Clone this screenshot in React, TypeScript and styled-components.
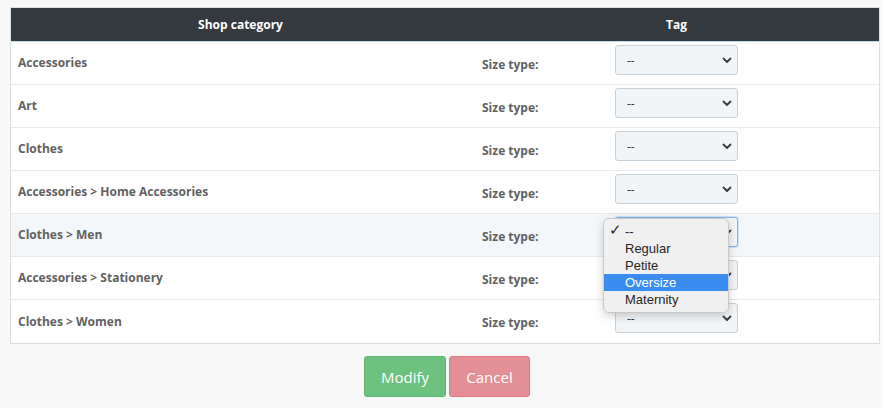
import React from "react";
import styled, { createGlobalStyle } from "styled-components";

const Global = createGlobalStyle`
  html, body { margin: 0; padding: 0; background: #f8f8f8; }
  body { font-family: "Open Sans", "DejaVu Sans", sans-serif; }
  * { box-sizing: border-box; }
`;

const Page = styled.div`
  padding: 7px 4px 0 10px;
  width: 883px;
`;

const Table = styled.div`
  width: 870px;
  border: 1px solid #dcdfe2;
  background: #fff;
`;

const HeaderRow = styled.div`
  display: grid;
  grid-template-columns: 459px 1fr;
  height: 34px;
  background: #343a40;
  border-bottom: 1px solid #b9dde9;
`;

const HeaderCell = styled.div<{ $shift?: number }>`
  display: flex;
  align-items: center;
  justify-content: center;
  color: #fff;
  font-weight: 700;
  font-size: 12px;
  padding-bottom: 1px;
  padding-left: ${(p) => p.$shift ?? 0}px;
`;

const Row = styled.div<{ $hover?: boolean; $last?: boolean }>`
  display: grid;
  grid-template-columns: 459px 1fr;
  height: 43px;
  background: ${(p) => (p.$hover ? "#f4f7fa" : "#fff")};
  border-bottom: ${(p) => (p.$last ? "none" : "1px solid #e6e9ed")};
`;

const CategoryCell = styled.div`
  display: flex;
  align-items: center;
  padding: 0 0 1px 7px;
  font-size: 12px;
  font-weight: 700;
  color: #616161;
`;

const TagCell = styled.div`
  display: flex;
  align-items: flex-start;
  padding: 3px 0 0 12px;
`;

const Label = styled.div`
  width: 133px;
  padding-top: 12px;
  line-height: 16px;
  font-size: 12px;
  font-weight: 700;
  color: #616161;
`;

const SelectBox = styled.div<{ $focus?: boolean }>`
  position: relative;
  width: 123px;
  height: 30px;
  display: flex;
  align-items: center;
  justify-content: space-between;
  padding: 0 5px 0 11px;
  background: #f2f5f7;
  border: 1px solid ${(p) => (p.$focus ? "#7fb6e8" : "#c7d1d9")};
  border-radius: 3px;
  box-shadow: ${(p) => (p.$focus ? "0 0 0 1px rgba(128,182,232,0.35)" : "none")};
  font-size: 12px;
  color: #444;
`;

const Value = styled.span`
  font-size: 12px;
  color: #333;
  margin-top: 1px;
`;

const Dropdown = styled.div`
  position: absolute;
  left: -13px;
  top: 0px;
  width: 126px;
  padding: 4px 0 4px;
  background: #f0f0f0;
  border: 1px solid #c9c9c9;
  border-radius: 6px;
  box-shadow: 0 3px 10px rgba(0, 0, 0, 0.18);
  z-index: 5;
  font-family: "Liberation Sans", Arial, sans-serif;
`;

const Option = styled.div<{ $active?: boolean }>`
  position: relative;
  height: 17px;
  line-height: 17px;
  padding-left: 21px;
  font-size: 13px;
  color: ${(p) => (p.$active ? "#fff" : "#262626")};
  background: ${(p) => (p.$active ? "#3a8cf1" : "transparent")};
`;

const Check = styled.span`
  position: absolute;
  left: 5px;
  top: -1px;
  font-family: "DejaVu Sans", sans-serif;
  font-size: 15px;
  font-weight: 300;
  color: #262626;
`;

const Actions = styled.div`
  display: flex;
  justify-content: center;
  gap: 3px;
  margin-top: 12px;
  padding-left: 5px;
`;

const Button = styled.button<{ $variant: "ok" | "cancel" }>`
  height: 41px;
  padding: 0;
  width: ${(p) => (p.$variant === "ok" ? "82px" : "81px")};
  border-radius: 3px;
  border: 1px solid ${(p) => (p.$variant === "ok" ? "#5db86f" : "#e07b85")};
  background: ${(p) => (p.$variant === "ok" ? "#6cc17e" : "#e48f96")};
  color: #fff;
  font-family: "Open Sans", sans-serif;
  font-size: 15px;
`;

const Chevron = () => (
  <svg width="10" height="7" viewBox="0 0 10 7">
    <path d="M1.5 1.5 L5 5 L8.5 1.5" fill="none" stroke="#3b3b3b" strokeWidth="1.8" strokeLinecap="round" strokeLinejoin="round" />
  </svg>
);

const categories = [
  "Accessories",
  "Art",
  "Clothes",
  "Accessories > Home Accessories",
  "Clothes > Men",
  "Accessories > Stationery",
  "Clothes > Women",
];

const options = ["--", "Regular", "Petite", "Oversize", "Maternity"];

export default function App() {
  return (
    <>
      <Global />
      <Page>
        <Table>
          <HeaderRow>
            <HeaderCell>Shop category</HeaderCell>
            <HeaderCell $shift={4}>Tag</HeaderCell>
          </HeaderRow>
          {categories.map((c, i) => {
            const open = i === 4;
            return (
              <Row key={c} $hover={open} $last={i === categories.length - 1}>
                <CategoryCell>{c}</CategoryCell>
                <TagCell>
                  <Label>Size type:</Label>
                  <SelectBox $focus={open}>
                    <Value>--</Value>
                    <Chevron />
                    {open && (
                      <Dropdown>
                        {options.map((o, k) => (
                          <Option key={o} $active={o === "Oversize"}>
                            {k === 0 && <Check>✓</Check>}
                            {o}
                          </Option>
                        ))}
                      </Dropdown>
                    )}
                  </SelectBox>
                </TagCell>
              </Row>
            );
          })}
        </Table>
        <Actions>
          <Button $variant="ok">Modify</Button>
          <Button $variant="cancel">Cancel</Button>
        </Actions>
      </Page>
    </>
  );
}
